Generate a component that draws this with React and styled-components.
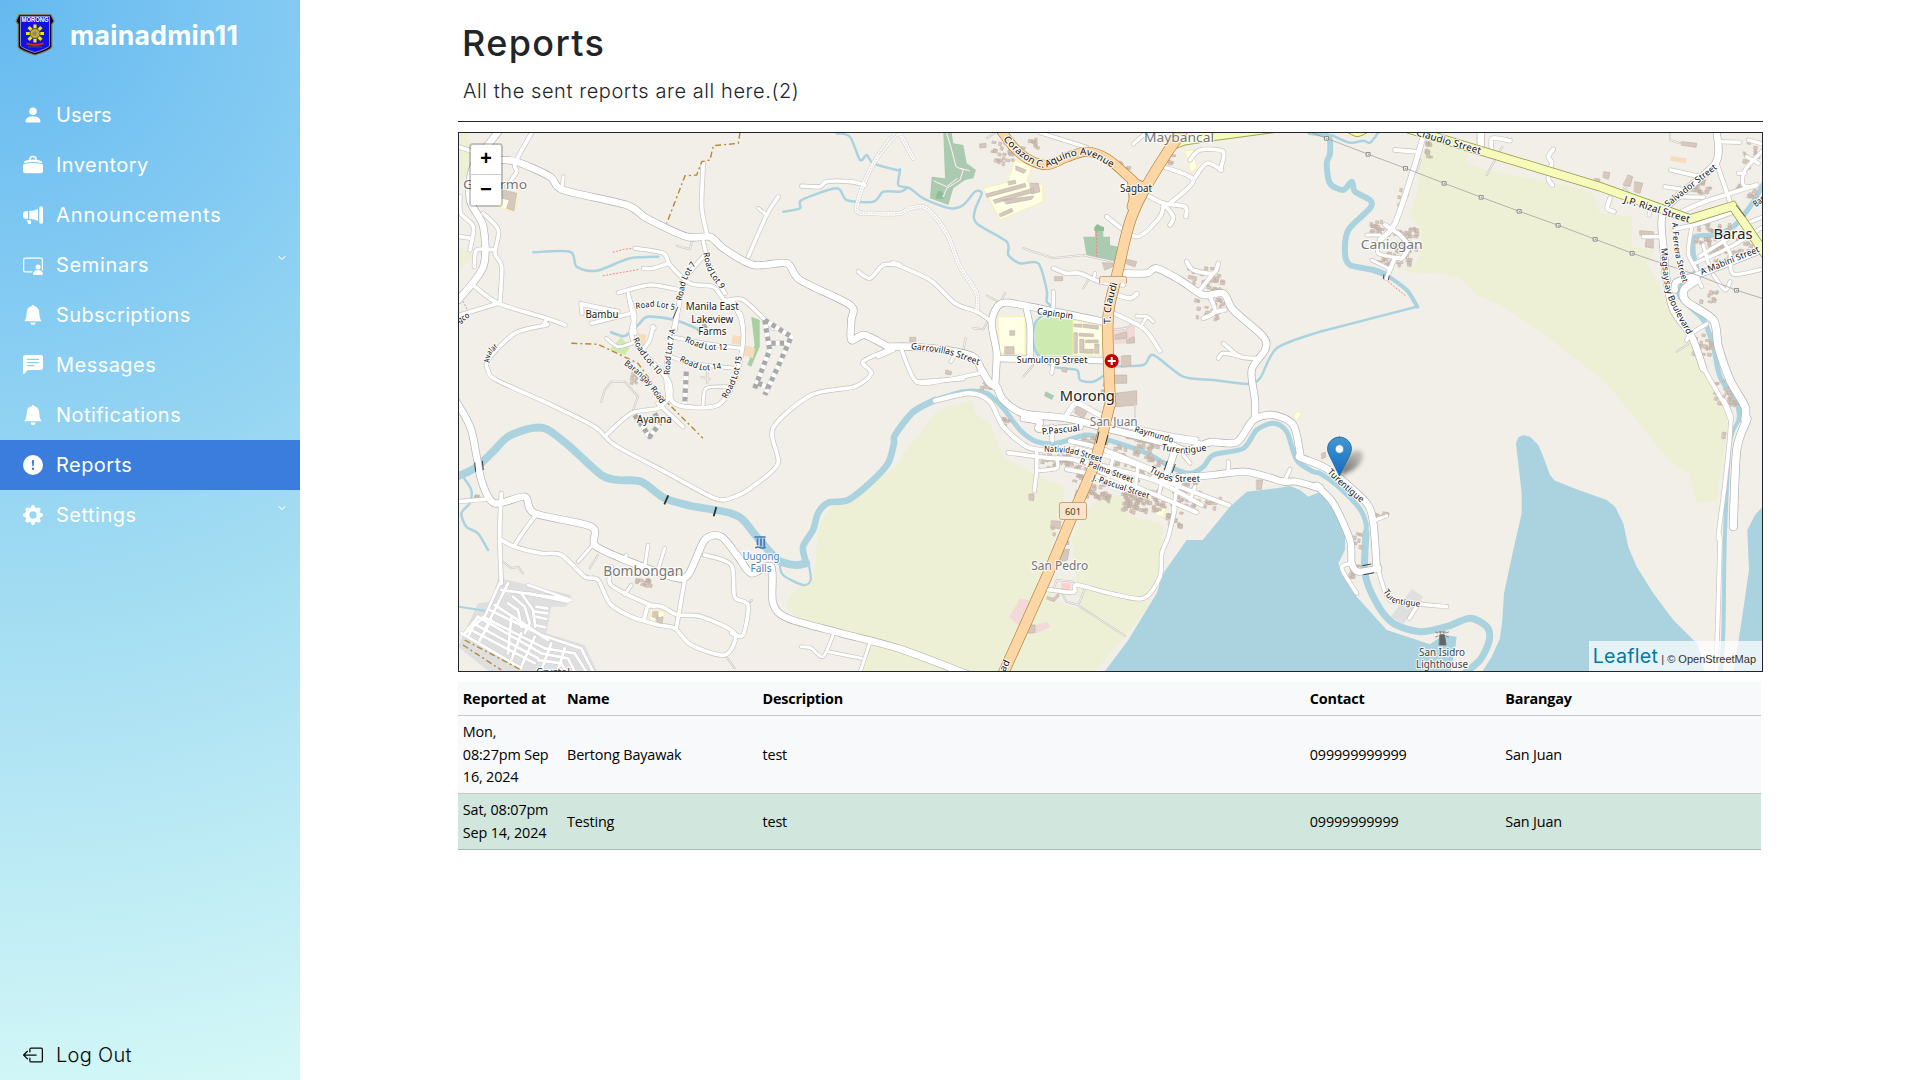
import React from "react";
import styled, { createGlobalStyle } from "styled-components";
import {
  BsPersonFill,
  BsMegaphoneFill,
  BsPersonVideo3,
  BsBellFill,
  BsChatLeftTextFill,
  BsExclamationCircleFill,
  BsGearFill,
  BsBoxArrowLeft,
  BsChevronDown,
} from "react-icons/bs";

const GlobalStyle = createGlobalStyle`
  *, *::before, *::after { box-sizing: border-box; }
  body {
    margin: 0;
    background: #fff;
    color: #212529;
    font-family: "Inter", "Liberation Sans", sans-serif;
  }
`;

const Page = styled.div`
  display: flex;
  height: 1080px;
  overflow: hidden;
`;

/* ---------- sidebar ---------- */

const Sidebar = styled.nav`
  flex: 0 0 300px;
  display: flex;
  flex-direction: column;
  background: radial-gradient(
    circle at 0 0,
    #65b9f0 0,
    #84cbf3 300px,
    #90d2f2 417px,
    #a0dbf2 580px,
    #d5f8f7 1120px
  );
`;

const Brand = styled.div`
  display: flex;
  align-items: center;
  height: 70px;
  padding-left: 15px;
  gap: 15px;
`;

const BrandName = styled.span`
  color: #fff;
  font-size: 26.5px;
  font-weight: 650;
  line-height: 30px;
  letter-spacing: 0.3px;
`;

const NavList = styled.div`
  display: flex;
  flex-direction: column;
  flex: 1;
  padding-top: 20px;
`;

const NavItem = styled.a`
  display: flex;
  align-items: center;
  flex: 0 0 50px;
  padding: 0 14px 0 23px;
  gap: 13px;
  color: ${(p) => (p.$dark ? "#06080c" : "#fff")};
  background: ${(p) => (p.$active ? "#3b7ddd" : "transparent")};
  svg { flex: none; }
`;

const NavLabel = styled.span`
  flex: 1;
  font-size: 20px;
  line-height: 30px;
  font-weight: ${(p) => (p.$light ? 350 : 430)};
  letter-spacing: ${(p) => p.$track || 0}px;
  white-space: nowrap;
`;

const Caret = styled(BsChevronDown)`
  align-self: flex-start;
  margin-top: 14px;
  stroke: #fff;
  stroke-width: 0.9px;
`;

/* ---------- content ---------- */

const Main = styled.main`
  flex: 1;
  padding: 0 157px 0 158px;
`;

const Heading = styled.header`
  display: flex;
  flex-direction: column;
  height: 122px;
  padding: 22px 0 0 4px;
  border-bottom: 1px solid #212529;
`;

const Title = styled.h1`
  margin: 0 0 8px;
  font-size: 36px;
  font-weight: 500;
  line-height: 42px;
  letter-spacing: 1.35px;
`;

const Subtitle = styled.p`
  margin: 4px 0 0 1px;
  font-size: 20px;
  font-weight: 350;
  line-height: 30px;
  letter-spacing: 0.58px;
`;

const MapFrame = styled.section`
  position: relative;
  margin-top: 10px;
  height: 540px;
  border: 1px solid #212529;
  background: #f2efe9;
  overflow: hidden;
  > svg { display: block; }
`;

const ZoomControl = styled.div`
  position: absolute;
  left: 10px;
  top: 10px;
  display: flex;
  flex-direction: column;
  border: 2px solid rgba(0, 0, 0, 0.2);
  border-radius: 4px;
  background-clip: padding-box;
`;

const ZoomButton = styled.button`
  width: 30px;
  height: 30px;
  padding: 1px 0 0;
  border: 0;
  border-bottom: ${(p) => (p.$first ? "1px solid #ccc" : "0")};
  border-radius: ${(p) => (p.$first ? "2px 2px 0 0" : "0 0 2px 2px")};
  background: #fff;
  color: #000;
  font: bold 20px/28px "Liberation Mono", monospace;
`;

const Attribution = styled.div`
  position: absolute;
  right: 0;
  bottom: 0;
  display: flex;
  align-items: baseline;
  height: 30px;
  padding: 0 6px 0 4px;
  gap: 3px;
  background: rgba(255, 255, 255, 0.7);
  color: #333;
  font: 11px/30px "Liberation Sans", Arial, sans-serif;
  white-space: nowrap;
`;

const LeafletLink = styled.a`
  color: #0078a8;
  font: 420 19.6px/30px "Inter", sans-serif;
  letter-spacing: 0.3px;
`;

const Table = styled.table`
  width: 1303px;
  margin-top: 10px;
  table-layout: fixed;
  border-collapse: collapse;
  color: #000;
  font: 14.4px/22.5px "Open Sans", "Noto Sans", sans-serif;
`;

const Row = styled.tr`
  height: ${(p) => p.$h}px;
  background: ${(p) => (p.$tone === "success" ? "#d1e7dd" : "#f8f9fa")};
  border-bottom: 1px solid ${(p) => (p.$tone === "success" ? "#a7b9b1" : "#c6c7c8")};
`;

const Cell = styled.td`
  padding: 1.5px 4.8px 0;
  text-align: left;
  vertical-align: middle;
  white-space: pre-line;
  letter-spacing: -0.15px;
`;

const HeadCell = styled(Cell).attrs({ as: "th" })`
  font-weight: 700;
  letter-spacing: -0.2px;
`;

/* ---------- map geometry ----------
   Points are survey thirds of a pixel, relative to the origin of the sheet
   named by the letter in front of them. */

const SHEETS = {
  A: [440, 0],
  B: [458, 300],
  C: [880, 120],
  D: [880, 380],
  E: [1300, 120],
  F: [1300, 400],
};

function parse(src) {
  let o = SHEETS.A;
  const pts = [];
  src.trim().split(/\s+/).forEach((t) => {
    if (SHEETS[t]) o = SHEETS[t];
    else {
      const [x, y] = t.split(",").map(Number);
      pts.push([o[0] + x / 3, o[1] + y / 3]);
    }
  });
  return pts;
}
const f = (n) => n.toFixed(1);
const line = (src) => "M" + parse(src).map(([x, y]) => `${f(x)} ${f(y)}`).join("L");
const area = (src) => line(src) + "Z";

function curve(src) {
  const p = parse(src);
  if (p.length < 3) return line(src);
  let d = `M${f(p[0][0])} ${f(p[0][1])}`;
  for (let i = 0; i < p.length - 1; i++) {
    const a = p[i - 1] || p[i], b = p[i], c = p[i + 1], e = p[i + 2] || c;
    const k = 7;
    d += `C${f(b[0] + (c[0] - a[0]) / k)} ${f(b[1] + (c[1] - a[1]) / k)} ${f(c[0] - (e[0] - b[0]) / k)} ${f(c[1] - (e[1] - b[1]) / k)} ${f(c[0])} ${f(c[1])}`;
  }
  return d;
}

const AREAS = [
  ["#edf0d5", "B 980,920 1000,880 1070,830 1075,750 1085,670 1120,620 1190,600 1250,545 1320,495 D 70,220 120,160 165,100 200,80 275,62 285,100 330,130 350,180 370,230 440,270 500,300 555,320 545,380 520,470 500,600 520,660 600,690 590,610 575,480 615,400 650,365 720,345 750,405 850,435 840,550 820,610 790,650 805,680 730,775 690,820 640,880 B 1205,1120 1235,1035 1040,970"],
  ["#edf0d5", "E 385,55 360,130 350,220 330,290 365,330 360,400 345,435 300,450 360,460 410,458 480,475 530,525 600,555 720,635 910,780 1010,900 F 1080,150 1110,185 1165,220 1190,310 1250,305 1280,100 1280,20 E 1280,890 1220,770 1170,670 1120,590 1080,500 1040,430 1060,390 995,380 995,290 900,280 880,225 840,205 560,150 495,125 510,85"],
  ["#edf0d5", "A 55,398 82,398 90,450 100,520 55,545"],
  ["#edf0d5", "A 55,740 105,765 55,812"],
  ["#e0dfdf", "B 120,835 150,840 340,885 325,920 280,920 265,1000 380,1035 420,1120 100,1120 0,1040 60,910 100,905"],
  ["#e0dfdf", "F 335,568 370,590 310,672 272,650"],
  ["#aad3df", "D 670,880 745,780 830,640 850,580 920,480 968,480 1050,380 1100,335 1190,325 1230,318 F 0,270 25,290 60,275 100,330 135,400 135,450 115,490 125,520 170,590 260,690 390,733 430,705 470,710 465,750 450,825 0,825"],
  ["#aad3df", "F 540,825 575,770 600,715 607,660 612,580 640,450 665,340 665,280 648,130 655,112 670,105 690,110 715,135 730,170 750,225 765,242 830,268 920,300 945,320 970,370 985,440 1010,500 1060,580 1120,660 1190,730 1205,770 1215,825"],
  ["#aad3df", "F 1390,318 1365,345 1342,390 1347,510 1325,660 1300,825 1390,825"],
  ["#aacbaf", "C 190,38 215,38 220,70 250,75 260,130 288,150 280,175 255,180 220,205 205,255 150,235 155,170 195,175"],
  ["#aacbaf", "C 610,350 645,350 645,320 670,320 670,350 690,350 690,375 715,380 705,425 620,410"],
  ["#8fbd97", "C 643,322 652,312 662,318 672,322 672,333 643,333"],
  ["#8fbd97", "C 168,230 172,215 182,212 190,220 192,236 168,236"],
  ["#aacbaf", "D 497,34 523,47 515,60 492,47"],
  ["#cdebb0", "C 465,610 500,590 580,600 580,705 465,705"],
  ["#cdebb0", "B 455,150 490,110 515,145 500,165"],
  ["#aacfa0", "B 880,50 905,60 905,140 880,200 868,195 890,135"],
  ["#f5dcba", "B 540,100 565,105 555,150 540,145"],
  ["#f5dcba", "B 825,105 850,110 850,135 820,130"],
  ["#f5dcba", "B 860,135 892,145 885,175 855,165"],
  ["#f5dcba", "E 1112,108 1160,115 1157,130 1110,122"],
  ["#f2dad9", "C 700,625 765,615 765,670 700,672"],
  ["#f2dad9", "D 420,655 450,662 420,740 388,712"],
  ["#f2dad9", "D 430,745 500,725 512,740 470,760"],
  ["#ffd0d0", "D 545,608 572,610 570,630 542,628"],
];

const SCHOOLS = [
  "C 310,205 385,185 405,120 455,140 440,185 488,195 488,245 360,300 330,240",
  "C 355,590 435,590 435,705 360,700",
  "C 580,600 670,620 665,705 580,705",
  "A 190,570 235,580 225,635 172,620",
  "B 580,930 620,937 612,972 576,962",
  "C 915,92 940,90 950,145 935,155",
  "D 830,385 860,380 850,410 828,405",
  "D 1250,95 1265,100 1250,120 1240,112",
];

const RIVERS = [
  [7.8, "B -8,532 50,505 100,460 150,410 220,385 265,387 330,435 430,525 480,540 550,545 620,595 700,618 800,635 850,655 900,715 960,780 1010,795 1045,790"],
  [6.6, "B 1045,790 1035,740 1065,690 1080,640 1110,608 1170,600 1240,545 1290,490 1308,430 D 45,165 100,95 165,60"],
  [5, "D 160,62 250,35 320,40 370,85 420,150 470,185 530,190 620,165 700,185 800,220 880,265 930,280 970,260 1000,225 1090,205 1130,150 1180,130 1220,155 1250,240 1300,275 F 60,220 110,255 175,320 198,370 195,430"],
  [7, "F 198,400 195,520 230,610 280,670 360,695 440,680 510,655 560,680 568,720 540,780 480,830"],
  [2.3, "B 965,790 975,825 1035,855 1058,840 1052,790"],
  [2.5, "A 280,757 390,755 410,800 470,812 570,775 655,770"],
  [2.5, "A 1190,400 1230,410 1260,480 1280,465 1300,490 1370,510 C 60,150 55,195 90,205 130,235 210,265 250,255 285,215 305,220 285,270 290,310 380,365 385,405 420,430 475,430 500,510 500,545 515,565 465,610 465,690 520,740 590,750 600,780 640,785 680,760 700,740 790,735 820,705 910,770 1000,780 1100,792 1140,775 1190,685 1320,635 E 80,630 350,560"],
  [4, "E 352,560 320,510 260,465"],
  [6, "E 262,466 220,450 150,435 135,400 145,330 210,265 210,240 165,215 155,185 130,210 90,190 80,130 90,100 85,50 30,36"],
  [2.5, "A 1030,635 1080,625 1085,600 1190,565 1220,600 1300,605 1330,575 1380,575 C 80,205"],
  [2.5, "E 95,45 150,68 190,62 210,68 235,38"],
  [5, "E 1392,190 1350,260 1300,320 1240,345 1185,350 1180,400 1190,450 1150,490 1140,530 1210,600 1240,680 1260,770 1310,850 1320,900"],
  [4, "F 1320,0 1315,60 1290,130 1275,400 1270,700 1262,825"],
  [2, "B 0,920 80,932"],
  [2.5, "B 15,530 40,570 35,610 10,640 25,680 60,700 90,750"],
  [2.8, "B 460,97 500,108 540,75 570,50 650,60 715,85"],
];

/* white roads: [fill width, points] */
const ROADS = [
  [6.7, "A 180,480 230,485 330,530 370,570 560,615 620,655 740,710 810,710 850,745 940,795 1040,790 1080,840 1230,915 B 1180,60 1180,120 1220,105 1290,140 C 30,680 90,680 200,690 280,710 305,750 330,790 350,800 D 370,60 430,100 560,115 700,150 860,190 920,212 990,187 1070,187 1120,120 1180,105 1240,135 1260,220 F 0,172 70,200 120,235 200,310 220,370 230,505"],
  [6.7, "A 175,395 100,500 90,600 130,680 130,800 55,900"],
  [3.7, "A 275,398 225,490 230,515 200,560"],
  [3.7, "A 55,440 100,455"],
  [3.7, "A 130,640 175,690 165,760 185,800 180,905"],
  [3.7, "A 165,750 110,750 103,800"],
  [3.7, "A 105,860 175,910 320,955 375,975"],
  [3.7, "A 175,910 60,945"],
  [3.7, "A 60,590 62,640 100,680 90,750"],
  [3.7, "A 60,710 95,715"],
  [3.7, "A 320,960 310,975 B 265,75 170,100 90,180 90,210 115,240 280,315 410,380 470,435 620,515 770,595 830,590 890,555 960,490 945,385 1060,285 1190,260 1240,220 1215,185 1290,150"],
  [6.7, "B -5,305 40,390 70,540 110,610 200,590 230,640 400,680 410,735 490,775 640,830 690,825 740,720 790,710 840,770 880,820 940,800 945,910 990,955 1150,1000 1320,1045 D 260,882"],
  [3.8, "B 130,580 125,700 130,850"],
  [3.8, "B 130,720 170,740 250,760 310,765 380,830 420,840 460,915 550,960 570,920 610,920 660,945 730,950 830,1000 800,1065 700,1035 650,985 600,975 550,960"],
  [3.7, "B 0,605 80,598"],
  [3.7, "B 230,650 200,690 170,735"],
  [3, "B 400,740 360,785"],
  [3, "B 570,735 560,800"],
  [3, "B 620,745 600,810"],
  [3, "B 505,765 500,780"],
  [3.7, "B 680,840 655,985"],
  [3.7, "B 740,765 820,795 830,890 870,915 855,1005 820,1000"],
  [3.7, "B 460,800 455,850 510,885 590,920"],
  [3, "B 520,855 500,885"],
  [3.7, "B 445,405 520,340 600,325 635,290"],
  [3, "B 1030,1040 1060,1045 1095,1070 1125,1005"],
  [3, "B 1110,1055 1210,1075"],
  [3, "B 1235,1030 1205,1120"],
  [4, "B 515,0 530,50 525,120 630,240 640,300 680,320 780,315 830,240 855,130 850,60 820,0"],
  [3.7, "B 665,0 625,200 630,290"],
  [3.2, "B 640,110 740,130 850,145"],
  [3.2, "B 640,170 700,190 830,205"],
  [3, "B 735,315 745,265 810,260"],
  [3.7, "B 600,310 675,380"],
  [3, "B 445,115 480,140 520,130"],
  [3.7, "B 585,80 575,120 550,155"],
  [5, "B 585,82 586,84"],
  [3.7, "B 370,10 372,40"],
  [4, "B 370,12 480,35"],
  [3.7, "B 400,70 440,60 520,40"],
  [3.7, "A 535,878 630,855 720,870"],
  [3.7, "A 565,880 580,960 585,1000"],
  [3.7, "A 790,770 740,830 720,900 705,990"],
  [3.7, "A 585,745 670,760 690,795 750,850 820,860 855,900 910,900 1000,985"],
  [3.7, "A 855,900 900,940 910,990"],
  [3.7, "A 610,805 640,805 685,790"],
  [3.8, "A 790,490 785,620 800,700"],
  [3.7, "A 790,725 810,800 855,880"],
  [3.5, "A 1015,590 980,645 925,770"],
  [3, "A 955,625 980,645"],
  [3, "A 370,530 366,565"],
  [3.7, "A 1085,558 1140,560 1160,545 1230,545 1275,555"],
  [3.7, "A 1255,815 1290,835 1330,795 1380,795 C 40,430 150,480 225,550 290,575 335,605"],
  [6.5, "C 345,800 350,700 335,605 365,550 450,560 670,605"],
  [5.8, "C 360,716 680,722"],
  [5.8, "C 440,570 450,620 450,710"],
  [6.6, "C 730,460 800,460 830,445 900,480 970,525 1030,520 1060,570 1150,650 1155,690 1115,750 1125,840 D 1125,110"],
  [3.8, "C 520,445 560,460 600,460 660,485 730,495"],
  [3, "C 645,460 640,480"],
  [3.8, "C 690,575 790,625 840,693"],
  [3, "C 770,588 800,590 820,605"],
  [3, "C 800,590 785,615"],
  [4.4, "C 712,525 750,535 770,522"],
  [3.4, "C 520,515 520,560"],
  [3.8, "C 680,290 770,350 840,290 850,250"],
  [4, "C 800,225 850,250 915,260 918,290"],
  [4, "C 850,250 880,290 870,315"],
  [3.8, "C 850,140 940,180 870,250"],
  [3.8, "C 940,180 980,130 1025,150"],
  [3.8, "C 930,120 960,90 1030,95 1020,150"],
  [3.4, "C 480,38 620,82"],
  [3.4, "C 760,72 790,45"],
  [4, "C 920,425 940,450 1000,460 1015,430"],
  [3.8, "C 1000,460 960,510"],
  [4, "C 990,530 1005,575 970,595"],
  [4, "C 1000,577 1035,570"],
  [3.6, "C -5,710 40,690"],
  [3.6, "C 65,690 110,785 200,780 300,760"],
  [3, "C 228,700 212,725"],
  [3.4, "C 520,730 515,760"],
  [3.6, "C 1125,715 1080,710 1030,670"],
  [3.6, "C 1080,708 1030,700 1015,715"],
  [5, "E 368,55 340,150 285,310 240,360"],
  [4, "E 255,315 300,345 325,380 305,415 285,415 260,475"],
  [3, "E 240,345 200,345"],
  [3.4, "E 240,360 235,400 300,415"],
  [3, "E 215,420 265,445"],
  [6.5, "E 542,36 542,85"],
  [4, "E 575,90 577,55 630,62"],
  [4, "E 760,88 745,110 755,130 745,175 757,195"],
  [4, "E 285,90 350,95"],
  [4, "E 930,235 922,265 942,275"],
  [3.4, "E 1050,275 1047,285"],
  [6.6, "E 1250,36 1246,130 1110,250 1085,300 1090,380 1100,480 1120,570 1175,650 1210,745"],
  [3.8, "E 1205,735 1260,830 1290,880 1292,900 F 1270,0 1292,60 1275,250 1255,410 1260,430 1248,825"],
  [7.5, "E 1190,480 1152,510 1160,545 1240,600 1255,680 1290,780 1335,860 1335,900 F 1340,60 1310,150 1300,380"],
  [6, "E 1125,510 1130,485 1200,462 1390,388"],
  [4, "E 1145,275 1220,243 1370,195"],
  [4, "E 1250,130 1290,245"],
  [3.4, "E 1260,65 1320,67"],
  [3.8, "E 1112,150 1200,170"],
  [3.6, "E 1120,230 1210,232"],
  [3.6, "E 1095,200 1160,210"],
  [4, "E 1120,328 1200,310 1310,272"],
  [3.4, "E 1175,322 1165,400 1190,450"],
  [3.4, "E 1185,430 1290,382 1390,320"],
  [3.4, "E 1200,408 1290,352"],
  [3.4, "E 1210,375 1225,430"],
  [3.4, "E 1265,355 1290,400 1300,462 1390,447"],
  [3.4, "E 1345,60 1390,72"],
  [3.4, "E 1390,90 1335,150 1330,195 1365,200"],
  [3.4, "E 1315,160 1335,160"],
  [3.4, "E 1340,110 1375,130"],
  [3.4, "E 1240,465 1275,510 1290,485"],
  [3.4, "E 1195,480 1205,500"],
  [3.6, "E 1030,350 1080,350"],
  [3.6, "E 1160,660 1175,640 1220,612"],
  [3.4, "E 1340,310 1390,290"],
  [4.4, "D 165,62 270,40 330,65 370,140 440,200 500,212"],
  [6, "D 430,115 480,125 480,148 600,140"],
  [4.4, "D 515,140 517,180"],
  [4.4, "D 570,183 660,205 820,270"],
  [4, "D 385,218 500,233 580,238 650,270 950,397"],
  [4, "D 560,268 640,285 780,335"],
  [4, "D 600,240 820,300 965,375"],
  [4, "D 820,290 1047,376"],
  [4, "D 590,205 740,245 900,310"],
  [3.6, "D 470,210 470,270 463,332"],
  [3.4, "D 470,272 530,265 530,235"],
  [3.4, "D 700,230 685,290"],
  [3.4, "D 775,250 765,330"],
  [3.4, "D 850,290 835,350"],
  [3.4, "D 895,300 880,390"],
  [3.4, "D 945,320 930,360"],
  [6.5, "D 885,210 862,278"],
  [3.4, "D 910,225 930,250"],
  [6.4, "D 890,292 1000,285 1090,275 1160,290 1210,305 1250,305 1320,325 F 50,258 100,310 150,420 155,490 175,515 235,505"],
  [3.4, "D 1045,275 1045,245"],
  [3.4, "D 1215,300 1230,268"],
  [3.8, "D 885,385 865,470 845,520 840,590 790,655 690,640 590,615 580,637 500,628"],
  [3.8, "D 700,130 870,165 950,178"],
  [4.4, "D 780,160 960,190"],
  [5, "D 560,105 590,70 640,95 700,125"],
  [3.6, "D 110,6 250,-4"],
  [3.6, "F 235,510 270,600 360,612 440,620"],
  [3.4, "F 355,612 328,655"],
  [3.6, "F 155,490 125,505 170,580"],
  [3.2, "F 220,362 260,348"],
];

/* closely built subdivision in the south-west corner */
const LANES = [
  "B 125,850 80,950 20,1000", "B 150,850 110,930 80,990", "B 130,870 340,900 210,855", "B 210,880 330,905",
  "B 165,890 200,920 215,970 200,1000", "B 150,910 180,930 190,980", "B 190,880 225,930 232,980",
  "B 235,920 268,925", "B 232,935 268,940", "B 232,950 265,957", "B 232,975 262,982",
  "B 20,1000 60,950 250,1060", "B 30,985 230,1090", "B 45,970 240,1075", "B 75,950 260,1045", "B 95,930 250,1005 370,1045 405,1115",
  "B 110,915 180,960 270,1020", "B 10,1000 190,1105", "B 260,1045 350,1060 385,1115", "B 250,1060 330,1075 350,1115", "B 240,1080 310,1090 325,1115",
  "B 60,950 30,1010", "B 100,960 60,1030", "B 160,950 150,1060", "B 190,1000 160,1080", "B 230,1010 190,1100", "B 280,1030 250,1110", "B 320,1045 300,1110",
];

const TWIGS = [
  "C 430,385 520,415 610,405 700,425", "C 375,520 355,560", "C 320,527 365,550", "C 280,625 310,628 325,600", "C 625,480 610,505",
  "C 257,655 250,690", "C 430,770 460,735", "C 320,55 345,38", "C 700,630 740,625 760,610",
  "C 200,40 215,90 228,140 250,150 240,180 200,205 190,230", "C 162,183 200,200 232,175", "C 240,145 268,152",
  "B 430,305 440,270 460,245 500,245 540,290 525,330", "B 135,785 160,805 180,800 195,820", "B 420,765 395,805",
  "B 805,1070 830,1105", "B 868,915 882,900", "B 730,230 755,238", "B 748,210 748,250", "A 710,737 750,748 755,725",
  "D 545,640 560,665 595,675 615,625", "D 520,630 530,600 580,605", "D 600,680 735,768", "D 765,75 765,110", "E 607,80 560,165",
  "E 350,155 362,120", "E 1110,40 1110,60 1140,70", "E 1130,695 1165,672", "E 965,215 975,200 990,225",
];

const GRAVEL = [
  "A 1380,395 1340,430 1280,530 1250,630 1300,640 1380,640 C 90,265 140,265 200,340 240,440 290,520 290,575",
  "C 0,100 50,38",
  "C 58,38 100,115",
];

const PAVERS = [
  "B 920,60 1000,110 960,200 920,285",
  "B 920,60 935,150 890,265",
  "B 940,130 985,130",
  "B 900,250 930,262",
  "B 685,215 680,310",
  "B 530,345 575,410 605,370 590,340",
  "B 745,75 720,95",
];

const TRACKS = [
  "A 900,398 895,430 820,437 810,480 785,485 770,525 735,527 715,580 680,670",
  "B 340,130 420,133 540,190 620,300 735,415",
  "B 20,1020 190,1110",
  "B 15,1035 130,1110",
];

const FOOTWAYS = ["A 520,757 550,748 582,745", "A 490,827 600,808", "C 650,335 650,415", "E 265,485 320,530", "A 70,905 85,935"];

const ORANGE = [
  [8.8, "C 362,30 400,80 440,115 500,135 560,112 620,95 680,115 740,165 770,200 755,260"],
  [10, "C 905,38 860,100 790,215 755,290 735,360 712,460 688,560 683,640 690,840 D 688,80 640,260 580,400 500,590 370,880"],
];

const YELLOW = "E 320,25 545,93 900,200 1170,297 1298,258 1340,320 1395,402";

const CLUSTERS = [
  ["C", 335, 60, 60, 70, 22], ["C", 420, 48, 50, 40, 8], ["C", 925, 440, 100, 80, 46], ["C", 945, 530, 80, 65, 24],
  ["C", 820, 100, 60, 35, 8], ["C", 700, 120, 50, 25, 6],
  ["C", 300, 780, 40, 20, 7], ["C", 660, 760, 30, 60, 8], ["D", 480, 205, 90, 55, 30], ["D", 590, 165, 90, 25, 18],
  ["D", 680, 190, 160, 60, 34], ["D", 580, 260, 100, 90, 44], ["D", 725, 330, 110, 62, 70], ["D", 660, 250, 180, 50, 40],
  ["D", 830, 300, 130, 80, 44], ["D", 855, 390, 50, 50, 16], ["D", 540, 235, 60, 30, 12], ["D", 740, 160, 130, 35, 24],
  ["D", 625, 330, 60, 30, 16], ["D", 970, 350, 50, 30, 8], ["E", 210, 300, 60, 40, 18], ["E", 280, 320, 70, 110, 46],
  ["E", 230, 390, 60, 40, 16], ["E", 365, 60, 25, 50, 10], ["E", 1170, 170, 60, 50, 24], ["E", 1180, 350, 170, 70, 56],
  ["E", 1190, 290, 100, 40, 18], ["E", 1330, 60, 50, 100, 12], ["E", 1200, 510, 50, 40, 8], ["E", 1175, 640, 60, 60, 20],
  ["E", 1240, 780, 60, 70, 20], ["E", 1290, 190, 80, 50, 10], ["F", 160, 390, 25, 50, 6], ["F", 140, 490, 40, 40, 8],
  ["F", 225, 335, 40, 15, 6], ["D", 365, 110, 25, 25, 6], ["D", 515, 430, 50, 55, 7], ["B", 515, 215, 40, 30, 9], ["B", 50, 570, 20, 25, 5], ["B", 530, 835, 48, 18, 12],
  ["E", 295, 200, 20, 60, 6], ["F", 1270, 0, 40, 16, 8],
];

const HALLS = [
  "D 705,40 770,32 770,75 708,80", "D 590,70 625,90 610,115 585,100", "D 515,422 542,424 540,446 513,443", "D 545,510 568,508 562,540 540,545",
  "D 445,735 465,735 465,758 447,760", "D 448,342 462,342 461,362 448,360", "D 1130,300 1148,300 1144,328 1130,328", "D 502,650 520,655 535,640 538,648 522,665 502,658",
  "C 318,222 435,190 438,200 322,232", "C 340,240 460,205 462,216 345,250", "C 370,240 462,228 455,238 380,252", "C 358,282 395,265 398,275 362,290",
  "C 450,190 475,190 480,215 455,222", "C 385,185 405,180 408,190 387,195", "C 408,138 438,150 432,160 408,150", "C 705,645 740,635 740,655 707,658",
  "C 668,428 700,430 698,440 675,450", "C 740,418 770,425 765,440 740,432", "C 524,470 548,470 548,482 524,482", "C 375,680 402,680 402,702 375,702",
  "C 390,632 404,632 404,646 390,646", "C 700,765 740,765 740,790 700,790", "C 90,652 107,652 107,665 90,665", "C 198,750 215,755 212,765 197,762",
  "C 547,742 562,745 560,757 547,755", "C 300,72 318,70 318,82 300,84", "E 985,165 998,170 990,200 970,195", "E 1005,185 1028,190 1020,220 1003,215",
  "E 1145,65 1190,70 1188,82 1145,76", "E 1020,332 1060,335 1060,385 1035,380 1040,350 1020,345", "E 885,175 900,177 898,190 880,188", "E 912,155 930,158 925,178 910,172",
  "F 65,160 76,157 77,172 66,176", "F 1268,97 1278,97 1275,117 1266,115", "A 190,570 230,580 222,632 200,625 208,600 188,595",
  "B 585,935 600,935 600,955 583,950", "B 595,955 615,950 612,970 596,965",
  "C 583,612 605,612 605,622 583,620", "C 610,612 655,618 655,628 610,622", "C 583,638 592,638 592,700 583,700", "C 598,640 640,642 640,650 598,648",
  "C 600,658 612,658 612,698 600,698", "C 618,660 655,660 655,668 618,668", "C 645,672 657,672 657,700 645,700", "C 615,688 640,688 640,700 615,700",
  "C 725,708 752,706 752,738 725,742", "C 740,660 762,650 764,668 742,670",
];

function buildingsPath() {
  let seed = 11;
  const rnd = () => ((seed = (seed * 16807) % 2147483647) / 2147483647);
  let d = "";
  CLUSTERS.forEach(([s, x, y, w, h, n]) => {
    const o = SHEETS[s];
    for (let i = 0; i < n; i++) {
      const px = o[0] + (x + rnd() * w) / 3;
      const py = o[1] + (y + rnd() * h) / 3;
      const a = 1.8 + rnd() * 2.2;
      const b = 1.8 + rnd() * 2;
      d += `M${f(px)} ${f(py)}l${f(a)} .6l-.6 ${f(b)}l${f(-a)} -.6Z`;
    }
  });
  return d;
}
const BUILDINGS = buildingsPath() + HALLS.map(area).join("");

const PYLONS = "E 80,55 205,103 317,145 433,190 544,232 658,274 775,316 886,358 997,400 1310,511";

/* [text, sheet, centre x, baseline y, width px, size px, colour] */
const PLACES = [
  ["Manila East", "A", 817, 931, 53, 10, "#222"],
  ["Lakeview", "A", 817, 969, 42, 10, "#222"],
  ["Farms", "B", 763, 106, 28, 10, "#222"],
  ["Bambu", "A", 486, 955, 33, 10, "#222"],
  ["Ayanna", "B", 589, 370, 35, 10, "#222"],
  ["Bombongan", "B", 556, 827, 80, 14, "#777"],
  ["Uugong", "B", 909, 781, 37, 10, "#4c84bd"],
  ["Falls", "B", 909, 817, 21, 10, "#4c84bd"],
  ["Maybancal", "C", 897, 65, 70, 13, "#777"],
  ["Sagbat", "C", 768, 217, 32, 10, "#222"],
  ["Morong", "D", 622, 63, 55, 15, "#222"],
  ["San Juan", "D", 701, 138, 48, 12, "#777"],
  ["San Pedro", "D", 539, 570, 57, 12, "#777"],
  ["Caniogan", "E", 275, 388, 62, 13, "#777"],
  ["Baras", "E", 1299, 357, 39, 14, "#222"],
  ["San Isidro", "F", 426, 767, 46, 10, "#444"],
  ["Lighthouse", "F", 426, 803, 52, 10, "#444"],
  ["Guillermo", "A", 165, 568, 64, 13, "#777"],
  ["Crystal", "B", 285, 1128, 34, 10, "#444"],
];

/* [text, baseline, size] */
const STREETS = [
  ["Road Lot 7", "A 725,903 740,840 768,793", 8.4],
  ["Road Lot 9", "A 790,760 805,815 842,868", 8.4],
  ["Road Lot 5", "B 535,27 590,20 648,30", 8.4],
  ["Road Lot 12", "B 680,125 740,148 808,150", 8.4],
  ["Road Lot 14", "B 664,183 730,210 790,206", 8.4],
  ["Road Lot 10", "B 524,118 550,165 600,224", 8.4],
  ["Road Lot 7-A", "B 635,224 640,160 652,88", 8.4],
  ["Road Lot 15", "B 806,296 835,240 852,170", 8.4],
  ["Barangay Road", "B 497,193 560,245 608,312", 8.4],
  ["Avalar", "B 95,188 98,165 120,140", 8],
  ["gco", "A 58,970 90,950", 8],
  ["Corazon C. Aquino Avenue", "C 370,60 425,112 490,143 560,115 620,105 697,143", 9.6],
  ["Capinpin", "C 470,582 578,597", 9],
  ["Garrovillas Street", "C 92,687 200,702 295,735", 9],
  ["Sumulong Street", "C 410,730 622,730", 9],
  ["T. Claudi", "C 692,612 694,560 712,490", 9.6],
  ["P.Pascual", "D 487,164 600,152", 9],
  ["Natividad Street", "D 492,215 570,220 663,246", 8.4],
  ["R. Palma Street", "D 597,250 757,308", 8.4],
  ["J. Pascual Street", "D 637,300 805,356", 8.4],
  ["Raymundo", "D 762,155 878,188", 8.6],
  ["Turentigue", "D 845,210 910,220 980,212", 9],
  ["Tupas Street", "D 808,275 870,303 960,305", 9],
  ["ad", "D 375,877 390,845", 9.6],
  ["Turentigue", "F 82,218 125,260 182,308", 9],
  ["Turentigue", "F 250,575 280,608 360,620", 8.4],
  ["Claudio Street", "E 347,46 540,102", 9.6],
  ["J.P. Rizal Street", "E 970,247 1166,308", 9.6],
  ["Salvador Street", "E 1103,262 1252,145", 8.8],
  ["A. Ferrera Street", "E 1116,308 1125,400 1148,488", 8.2],
  ["Magsaysay Boulevard", "E 1083,385 1100,520 1162,645", 8.8],
  ["A Mabini Street", "E 1205,465 1380,395", 8.8],
  ["Bar", "E 1368,262 1395,240", 8.8],
];

function pathLength(src) {
  const p = parse(src);
  let n = 0;
  for (let i = 1; i < p.length; i++) n += Math.hypot(p[i][0] - p[i - 1][0], p[i][1] - p[i - 1][1]);
  return n;
}
function baseline(src) {
  const p = parse(src);
  const a = p[p.length - 2], b = p[p.length - 1];
  const k = 6 / Math.hypot(b[0] - a[0], b[1] - a[1]);
  return `${curve(src)}L${f(b[0] + (b[0] - a[0]) * k)} ${f(b[1] + (b[1] - a[1]) * k)}`;
}

const MapLabel = styled.text`
  font-family: "Noto Sans", sans-serif;
  font-size: ${(p) => p.$size}px;
  fill: ${(p) => p.$tone || "#111"};
  stroke: ${(p) => p.$halo || "rgba(255, 255, 255, 0.75)"};
  stroke-width: ${(p) => (p.$halo ? 0 : 2.4)}px;
  stroke-linejoin: round;
  paint-order: stroke;
`;

function MapDrawing() {
  return (
    <svg width="1303" height="538" viewBox="459 133 1303 538" fill="none" strokeLinejoin="round" strokeLinecap="round">
      {AREAS.map(([c, s], i) => <path key={i} d={area(s)} fill={c} />)}
      {SCHOOLS.map((s, i) => <path key={i} d={area(s)} fill="#ffffe5" stroke="#f6f0a0" strokeWidth="0.8" />)}
      {RIVERS.map(([w, s], i) => <path key={i} d={curve(s)} stroke="#aad3df" strokeWidth={w} />)}
      <path d={BUILDINGS} fill="#d5c8be" stroke="#bfaea3" strokeWidth="0.6" strokeLinejoin="miter" />

      {FOOTWAYS.map((s, i) => <path key={i} d={line(s)} stroke="#fa8072" strokeWidth="1" strokeDasharray="1 2.4" />)}
      {TWIGS.map((s, i) => <path key={i} d={line(s)} stroke="#c4c2be" strokeWidth="2" />)}
      {TWIGS.map((s, i) => <path key={i} d={line(s)} stroke="#f6f5f2" strokeWidth="1" />)}

      {ROADS.map(([w, s], i) => <path key={i} d={curve(s)} stroke={w > 5 ? "#b0b0b0" : "#c6c4c1"} strokeWidth={w + 1.3} />)}
      {LANES.map((s, i) => <path key={i} d={line(s)} stroke="#cfcdcd" strokeWidth="3.8" />)}
      {GRAVEL.map((s, i) => <path key={i} d={curve(s)} stroke="#cfcdc9" strokeWidth="4.8" />)}
      {GRAVEL.map((s, i) => <path key={i} d={curve(s)} stroke="#fdfdfc" strokeWidth="3.8" />)}
      {GRAVEL.map((s, i) => <path key={i} d={curve(s)} stroke="#e2e0de" strokeWidth="1.6" strokeDasharray="0.4 2.4" />)}
      {ROADS.map(([w, s], i) => <path key={i} d={curve(s)} stroke="#fff" strokeWidth={w} />)}
      {LANES.map((s, i) => <path key={i} d={line(s)} stroke="#fff" strokeWidth="2.8" />)}
      {PAVERS.map((s, i) => <path key={i} d={line(s)} stroke="#dcdad7" strokeWidth="5.4" strokeLinecap="butt" />)}
      {PAVERS.map((s, i) => <path key={i} d={line(s)} stroke="#fff" strokeWidth="4.6" strokeLinecap="butt" />)}
      {PAVERS.map((s, i) => <path key={i} d={line(s)} stroke="#a9a9a9" strokeWidth="5" strokeDasharray="4.4 4" strokeLinecap="butt" />)}
      {TRACKS.map((s, i) => <path key={i} d={line(s)} stroke="#b58a35" strokeWidth="1.4" strokeDasharray="6 3 2 3" strokeLinecap="butt" />)}

      <path d={area("C 870,95 915,75 1000,62 1180,36 900,36")} fill="#f6fabb" />
      <path d={line("C 870,92 915,75 1000,62 1180,38")} stroke="#949c3c" strokeWidth="0.9" />
      <path d={curve("E 140,36 172,50 205,36")} fill="#f6fabb" stroke="#949c3c" strokeWidth="0.9" />
      <path d={line(YELLOW)} stroke="#8f9740" strokeWidth="9.4" strokeLinejoin="miter" />
      <path d={line(YELLOW)} stroke="#f6fabb" strokeWidth="8" strokeLinejoin="miter" />
      {ORANGE.map(([w, s], i) => <path key={i} d={curve(s)} stroke="#b0823a" strokeWidth={w + 1.3} />)}
      <path d={area("C 742,165 790,185 800,200 760,275 750,260")} fill="#fcd6a4" stroke="#b0823a" strokeWidth="0.8" />
      {ORANGE.map(([w, s], i) => <path key={i} d={curve(s)} stroke="#fcd6a4" strokeWidth={w} />)}
      <path d={area("C 748,175 785,190 795,205 758,270 754,255")} fill="#fcd6a4" />

      <g stroke="#2e2e2e" strokeLinecap="butt">
        <path d={line("B 631,586 619,613")} strokeWidth="1.8" />
        <path d={line("B 775,621 767,649")} strokeWidth="1.8" />
        <path d={line("B 50,487 53,515")} strokeWidth="0.9" />
        <path d={line("B 73,482 76,510")} strokeWidth="0.9" />
        <path d={line("D 657,155 649,190")} strokeWidth="0.9" />
        <path d={line("D 684,165 676,195")} strokeWidth="0.9" />
        <path d={line("D 862,243 853,270")} strokeWidth="0.9" />
        <path d={line("D 886,252 876,279")} strokeWidth="0.9" />
        <path d={line("F 187,497 214,492")} strokeWidth="0.9" />
        <path d={line("F 190,524 222,518")} strokeWidth="0.9" />
        <path d={line("B 660,20 645,55")} strokeWidth="0.8" />
        <path d={line("E 252,463 250,478")} strokeWidth="0.8" />
        <path d={line("E 268,466 265,480")} strokeWidth="0.8" />
        <path d={line("E 1308,255 1335,290")} strokeWidth="0.7" />
      </g>

      <path d={line("E 30,36 80,55 205,103 317,145 433,190 544,232 658,274 775,316 886,358 997,400 1190,465 1310,511 1390,536")} stroke="#9a9a9a" strokeWidth="0.7" />
      {parse(PYLONS).map(([x, y], i) => (
        <g key={i}>
          <rect x={x - 1.8} y={y - 1.8} width="3.6" height="3.6" fill="#f4f2ee" stroke="#848484" strokeWidth="0.9" />
          <circle cx={x} cy={y} r="0.6" fill="#848484" />
        </g>
      ))}

      <g strokeWidth="1" stroke="#c9a27a" fill="#f8e5cd">
        <rect x="1059.5" y="502.5" width="27" height="17" rx="2" />
        <path d="M1099.5 283v-4.500a2 2 0 0 1 2-2h23a2 2 0 0 1 2 2V283" />
      </g>
      <MapLabel x="1073" y="514.8" textAnchor="middle" $size={9.4} $tone="#5b3a10" $halo="none">601</MapLabel>

      {STREETS.map(([t, s, size], i) => (
        <React.Fragment key={i}>
          <path id={`street-${i}`} d={baseline(s)} />
          <MapLabel $size={size}>
            <textPath href={`#street-${i}`} textLength={pathLength(s)} lengthAdjust="spacingAndGlyphs">{t}</textPath>
          </MapLabel>
        </React.Fragment>
      ))}
      {PLACES.map(([t, s, x, y, w, size, tone]) => (
        <MapLabel
          key={t}
          x={SHEETS[s][0] + x / 3}
          y={SHEETS[s][1] + y / 3}
          textAnchor="middle"
          textLength={w}
          lengthAdjust="spacingAndGlyphs"
          $size={size}
          $tone={tone}
        >
          {t}
        </MapLabel>
      ))}

      <circle cx="1111.700" cy="361" r="7" fill="#bf0000" />
      <path d="M1111.700 357v8M1107.700 361h8" stroke="#fff" strokeWidth="2" strokeLinecap="butt" />
      <path d="M755 537h10M757.500 539v5.500M761 539v6.500M764.300 539v7.500M756 547.500q2-1 4 0t5 0" stroke="#4579b8" strokeWidth="1.700" />
      <path d="M1440 635h4.500l1.500 10h-6.500zM1439 632h6.500" fill="#666" stroke="#666" strokeWidth="0.8" />
      <path d="M1440.300 632v2.500h3.600V632M1435.500 632l2.500 1M1435.500 637l2.500-1M1448.500 632l-2.500 1M1448.500 637l-2.500-1" stroke="#777" strokeWidth="0.8" />

      <defs>
        <linearGradient id="pin" x1="0" y1="0" x2="0" y2="1">
          <stop offset="0" stopColor="#4398d1" />
          <stop offset="1" stopColor="#126ac2" />
        </linearGradient>
        <linearGradient id="shade" x1="0" y1="1" x2="1" y2="0">
          <stop offset="0" stopColor="#000" stopOpacity="0.6" />
          <stop offset="1" stopColor="#000" stopOpacity="0.12" />
        </linearGradient>
        <filter id="soft" x="-50%" y="-50%" width="200%" height="200%"><feGaussianBlur stdDeviation="1.900" /></filter>
      </defs>
      <path d="M1340 476C1342 462 1350 450 1359 450C1367 452 1363 463 1353 470Z" fill="url(#shade)" filter="url(#soft)" />
      <g transform="translate(1327 436.500)">
        <path d="M12.500.6C5.900.6.6 5.800.6 12.200c0 3 1.400 5.900 2.600 8.300L12.500 39.500l9.300-19c1.200-2.400 2.600-5.300 2.600-8.300C24.400 5.800 19.100.6 12.500.6Z" fill="url(#pin)" stroke="#2e6da4" strokeWidth="1" />
        <circle cx="12.500" cy="12.500" r="4.300" fill="#fff" stroke="#3a7fb8" strokeWidth="0.7" />
      </g>
    </svg>
  );
}

function Crest() {
  return (
    <svg width="40" height="42" viewBox="0 0 40 42">
      <path d="M4 .8h32l3 6.500-2.200 3V33Q35 36.500 20 41Q5 36.500 3.200 33V10.300L1 7.300Z" fill="#05053a" stroke="#8d7a35" strokeWidth="1.100" />
      <path d="M5.500 2.500h29v29.500Q32 34.800 20 38.500Q8 34.800 5.500 32Z" fill="#1212dd" stroke="#b9c0ee" strokeWidth="0.700" />
      <text x="20" y="8.300" textAnchor="middle" textLength="27" lengthAdjust="spacingAndGlyphs" fontFamily="Liberation Sans" fontWeight="700" fontSize="6.800" fill="#fff">MORONG</text>
      <g stroke="#f1e21c" strokeWidth="3.200">
        <path d="M20 10.500v18M11 19.500h18M13.600 13.100l12.800 12.800M26.400 13.100L13.600 25.900" />
      </g>
      <circle cx="20" cy="19.500" r="5" fill="#c2a83a" stroke="#4e4a30" strokeWidth="0.900" />
      <path d="M17.500 18.500l2.500-1.500 2 2-1.500 3-3-1z" fill="#8c8672" />
      <path d="M11.500 28.500q8.500 3 17 0v2q-8.500 2.500-17 0z" fill="#d8262c" />
      <path d="M13 32.800h14" stroke="#39397a" strokeWidth="1.600" />
    </svg>
  );
}

function DuffleIcon() {
  return (
    <svg width="20" height="20" viewBox="0 0 20 20">
      <path d="M6.800 5.200C6.800 2.600 8 1.500 10 1.500s3.200 1.100 3.200 3.700" fill="none" stroke="#fff" strokeWidth="1.500" />
      <path d="M3.300 5.600Q10 3.600 16.700 5.600Q18.600 6 19.300 8.200Q10 5.600.7 8.200Q1.400 6 3.300 5.600Z" fill="#fff" />
      <path d="M.3 9.300Q10 6.600 19.700 9.300Q20 11 20 15.500Q20 18.300 17.800 18.300H2.200Q0 18.300 0 15.500Q0 11 .3 9.300Z" fill="#fff" />
    </svg>
  );
}

const NAV = [
  ["Users", BsPersonFill, 0.1],
  ["Inventory", DuffleIcon, 0.45],
  ["Announcements", BsMegaphoneFill, 0.9],
  ["Seminars", BsPersonVideo3, 0.65, { caret: true }],
  ["Subscriptions", BsBellFill, 0.4],
  ["Messages", BsChatLeftTextFill, 0.45],
  ["Notifications", BsBellFill, 0.45],
  ["Reports", BsExclamationCircleFill, 0.45, { active: true }],
  ["Settings", BsGearFill, 0.5, { caret: true }],
];

const HEAD = [["Reported at", "8%"], ["Name", "15%"], ["Description", "42%"], ["Contact", "15%"], ["Barangay", "20%"]];

const REPORTS = [
  { h: 78, cells: ["Mon,\n08:27pm Sep\n16, 2024", "Bertong Bayawak", "test", "099999999999", "San Juan"] },
  { h: 56, tone: "success", cells: ["Sat, 08:07pm\nSep 14, 2024", "Testing", "test", "09999999999", "San Juan"] },
];

export default function App() {
  return (
    <>
      <GlobalStyle />
      <Page>
        <Sidebar>
          <Brand>
            <Crest />
            <BrandName>mainadmin11</BrandName>
          </Brand>
          <NavList>
            {NAV.map(([label, Icon, track, opt = {}]) => (
              <NavItem key={label} $active={opt.active}>
                <Icon size={20} />
                <NavLabel $track={track}>{label}</NavLabel>
                {opt.caret && <Caret size={8} />}
              </NavItem>
            ))}
          </NavList>
          <NavItem $dark>
            <BsBoxArrowLeft size={20} />
            <NavLabel $light $track={0.3}>Log Out</NavLabel>
          </NavItem>
        </Sidebar>
        <Main>
          <Heading>
            <Title>Reports</Title>
            <Subtitle>All the sent reports are all here.(2)</Subtitle>
          </Heading>
          <MapFrame>
            <MapDrawing />
            <ZoomControl>
              <ZoomButton $first>+</ZoomButton>
              <ZoomButton>−</ZoomButton>
            </ZoomControl>
            <Attribution>
              <LeafletLink>Leaflet</LeafletLink>
              <span>| © OpenStreetMap</span>
            </Attribution>
          </MapFrame>
          <Table>
            <thead>
              <Row $h={33}>
                {HEAD.map(([t, w]) => <HeadCell key={t} width={w}>{t}</HeadCell>)}
              </Row>
            </thead>
            <tbody>
              {REPORTS.map((r) => (
                <Row key={r.h} $h={r.h} $tone={r.tone}>
                  {r.cells.map((c, i) => <Cell key={i}>{c}</Cell>)}
                </Row>
              ))}
            </tbody>
          </Table>
        </Main>
      </Page>
    </>
  );
}
